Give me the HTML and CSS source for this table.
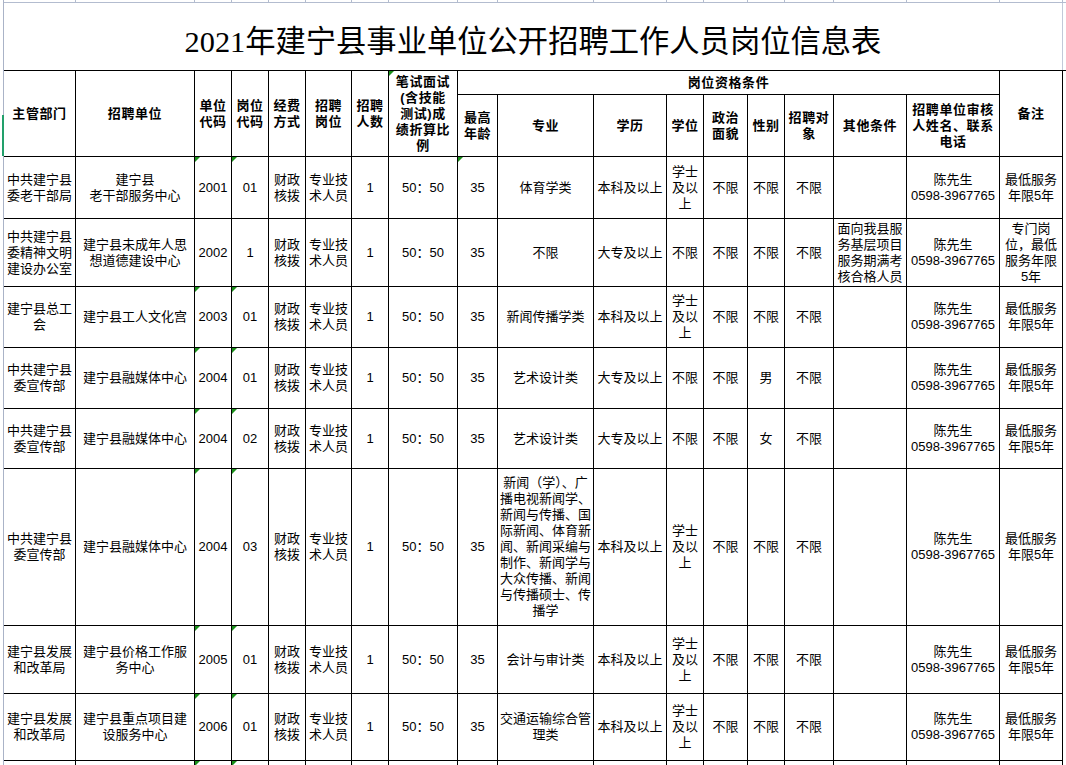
FILE: index.html
```html
<!DOCTYPE html>
<html lang="zh-CN">
<head>
<meta charset="utf-8">
<title>2021年建宁县事业单位公开招聘工作人员岗位信息表</title>
<link rel="stylesheet" href="styles.css">
</head>
<body>
<div class="sheet">
  <div class="topstrip">
    <span></span><span></span><span></span><span></span><span></span><span></span><span></span><span></span><span></span><span></span><span></span><span></span><span></span><span></span><span></span><span></span><span></span><span></span>
  </div>
  <div class="title">2021年建宁县事业单位公开招聘工作人员岗位信息表</div>
  <div class="grid">
    <div class="c h r2">主管部门</div>
    <div class="c h r2">招聘单位</div>
    <div class="c h r2">单位<br>代码</div>
    <div class="c h r2">岗位<br>代码</div>
    <div class="c h r2">经费<br>方式</div>
    <div class="c h r2">招聘<br>岗位</div>
    <div class="c h r2">招聘<br>人数</div>
    <div class="c h r2 tri">笔试面试<br>(含技能<br>测试)成<br>绩折算比<br>例</div>
    <div class="c h s9">岗位资格条件</div>
    <div class="c h r2">备注</div>
    <div class="c h">最高<br>年龄</div>
    <div class="c h">专业</div>
    <div class="c h">学历</div>
    <div class="c h">学位</div>
    <div class="c h">政治<br>面貌</div>
    <div class="c h">性别</div>
    <div class="c h">招聘对<br>象</div>
    <div class="c h">其他条件</div>
    <div class="c h">招聘单位审核<br>人姓名、联系<br>电话</div>

    <!-- row 1 -->
    <div class="c">中共建宁县<br>委老干部局</div>
    <div class="c">建宁县<br>老干部服务中心</div>
    <div class="c tri">2001</div>
    <div class="c tri">01</div>
    <div class="c">财政<br>核拨</div>
    <div class="c">专业技<br>术人员</div>
    <div class="c">1</div>
    <div class="c">50：50</div>
    <div class="c tri">35</div>
    <div class="c">体育学类</div>
    <div class="c">本科及以上</div>
    <div class="c">学士<br>及以<br>上</div>
    <div class="c">不限</div>
    <div class="c">不限</div>
    <div class="c">不限</div>
    <div class="c"></div>
    <div class="c">陈先生<br>0598-3967765</div>
    <div class="c">最低服务<br>年限5年</div>

    <!-- row 2 -->
    <div class="c">中共建宁县<br>委精神文明<br>建设办公室</div>
    <div class="c">建宁县未成年人思<br>想道德建设中心</div>
    <div class="c">2002</div>
    <div class="c">1</div>
    <div class="c">财政<br>核拨</div>
    <div class="c">专业技<br>术人员</div>
    <div class="c">1</div>
    <div class="c">50：50</div>
    <div class="c">35</div>
    <div class="c">不限</div>
    <div class="c">大专及以上</div>
    <div class="c">不限</div>
    <div class="c">不限</div>
    <div class="c">不限</div>
    <div class="c">不限</div>
    <div class="c">面向我县服<br>务基层项目<br>服务期满考<br>核合格人员</div>
    <div class="c">陈先生<br>0598-3967765</div>
    <div class="c">专门岗<br>位，最低<br>服务年限<br>5年</div>

    <!-- row 3 -->
    <div class="c">建宁县总工<br>会</div>
    <div class="c">建宁县工人文化宫</div>
    <div class="c tri">2003</div>
    <div class="c tri">01</div>
    <div class="c">财政<br>核拨</div>
    <div class="c">专业技<br>术人员</div>
    <div class="c">1</div>
    <div class="c">50：50</div>
    <div class="c">35</div>
    <div class="c">新闻传播学类</div>
    <div class="c">本科及以上</div>
    <div class="c">学士<br>及以<br>上</div>
    <div class="c">不限</div>
    <div class="c">不限</div>
    <div class="c">不限</div>
    <div class="c"></div>
    <div class="c">陈先生<br>0598-3967765</div>
    <div class="c">最低服务<br>年限5年</div>

    <!-- row 4 -->
    <div class="c">中共建宁县<br>委宣传部</div>
    <div class="c">建宁县融媒体中心</div>
    <div class="c tri">2004</div>
    <div class="c tri">01</div>
    <div class="c">财政<br>核拨</div>
    <div class="c">专业技<br>术人员</div>
    <div class="c">1</div>
    <div class="c">50：50</div>
    <div class="c">35</div>
    <div class="c">艺术设计类</div>
    <div class="c">大专及以上</div>
    <div class="c">不限</div>
    <div class="c">不限</div>
    <div class="c">男</div>
    <div class="c">不限</div>
    <div class="c"></div>
    <div class="c">陈先生<br>0598-3967765</div>
    <div class="c">最低服务<br>年限5年</div>

    <!-- row 5 -->
    <div class="c">中共建宁县<br>委宣传部</div>
    <div class="c">建宁县融媒体中心</div>
    <div class="c tri">2004</div>
    <div class="c tri">02</div>
    <div class="c">财政<br>核拨</div>
    <div class="c">专业技<br>术人员</div>
    <div class="c">1</div>
    <div class="c">50：50</div>
    <div class="c">35</div>
    <div class="c">艺术设计类</div>
    <div class="c">大专及以上</div>
    <div class="c">不限</div>
    <div class="c">不限</div>
    <div class="c">女</div>
    <div class="c">不限</div>
    <div class="c"></div>
    <div class="c">陈先生<br>0598-3967765</div>
    <div class="c">最低服务<br>年限5年</div>

    <!-- row 6 -->
    <div class="c">中共建宁县<br>委宣传部</div>
    <div class="c">建宁县融媒体中心</div>
    <div class="c tri">2004</div>
    <div class="c tri">03</div>
    <div class="c">财政<br>核拨</div>
    <div class="c">专业技<br>术人员</div>
    <div class="c">1</div>
    <div class="c">50：50</div>
    <div class="c">35</div>
    <div class="c">新闻（学）、广<br>播电视新闻学、<br>新闻与传播、国<br>际新闻、体育新<br>闻、新闻采编与<br>制作、新闻学与<br>大众传播、新闻<br>与传播硕士、传<br>播学</div>
    <div class="c">本科及以上</div>
    <div class="c">学士<br>及以<br>上</div>
    <div class="c">不限</div>
    <div class="c">不限</div>
    <div class="c">不限</div>
    <div class="c"></div>
    <div class="c">陈先生<br>0598-3967765</div>
    <div class="c">最低服务<br>年限5年</div>

    <!-- row 7 -->
    <div class="c">建宁县发展<br>和改革局</div>
    <div class="c">建宁县价格工作服<br>务中心</div>
    <div class="c tri">2005</div>
    <div class="c tri">01</div>
    <div class="c">财政<br>核拨</div>
    <div class="c">专业技<br>术人员</div>
    <div class="c">1</div>
    <div class="c">50：50</div>
    <div class="c">35</div>
    <div class="c">会计与审计类</div>
    <div class="c">本科及以上</div>
    <div class="c">学士<br>及以<br>上</div>
    <div class="c">不限</div>
    <div class="c">不限</div>
    <div class="c">不限</div>
    <div class="c"></div>
    <div class="c">陈先生<br>0598-3967765</div>
    <div class="c">最低服务<br>年限5年</div>

    <!-- row 8 -->
    <div class="c">建宁县发展<br>和改革局</div>
    <div class="c">建宁县重点项目建<br>设服务中心</div>
    <div class="c tri">2006</div>
    <div class="c tri">01</div>
    <div class="c">财政<br>核拨</div>
    <div class="c">专业技<br>术人员</div>
    <div class="c">1</div>
    <div class="c">50：50</div>
    <div class="c">35</div>
    <div class="c">交通运输综合管<br>理类</div>
    <div class="c">本科及以上</div>
    <div class="c">学士<br>及以<br>上</div>
    <div class="c">不限</div>
    <div class="c">不限</div>
    <div class="c">不限</div>
    <div class="c"></div>
    <div class="c">陈先生<br>0598-3967765</div>
    <div class="c">最低服务<br>年限5年</div>

    <!-- next row (cut off) -->
    <div class="c"></div><div class="c"></div><div class="c tri"></div><div class="c tri"></div>
    <div class="c"></div><div class="c"></div><div class="c"></div><div class="c"></div><div class="c"></div>
    <div class="c"></div><div class="c"></div><div class="c"></div><div class="c"></div><div class="c"></div>
    <div class="c"></div><div class="c"></div><div class="c"></div><div class="c"></div>
  </div>
  <div class="selmark"></div>
</div>
</body>
</html>
```

FILE: styles.css
```css
html, body {
  margin: 0;
  padding: 0;
  background: #ffffff;
  width: 1066px;
  height: 765px;
  overflow: hidden;
}

body {
  font-family: "Liberation Sans", "Noto Sans CJK SC", sans-serif;
  font-size: 13px;
  color: #000000;
}

.sheet {
  position: relative;
  margin-left: 3px;
  border-left: 1px solid #aab3c7;
  height: 765px;
}

.topstrip {
  display: grid;
  grid-template-columns: 72px 119px 37px 37px 37px 46px 37px 69px 40px 96px 73px 37px 44px 37px 49px 73px 93px 63px;
  height: 3px;
  border-bottom: 1px solid #b3bccf;
  box-sizing: border-box;
}

.topstrip span {
  border-right: 1px solid #b3bccf;
}

.title {
  width: 1059px;
  height: 67px;
  box-sizing: border-box;
  border-right: 1px solid #c2c9d8;
  padding-top: 4px;
  display: flex;
  align-items: center;
  justify-content: center;
  font-family: "Liberation Serif", "Noto Sans CJK SC", serif;
  font-size: 30.3px;
  white-space: nowrap;
}

.grid {
  display: grid;
  grid-template-columns: 72px 119px 37px 37px 37px 46px 37px 69px 40px 96px 73px 37px 44px 37px 49px 73px 93px 63px;
  grid-template-rows: 24px 62px 62px 68px 61px 61px 60px 157px 68px 67px 40px;
  border-top: 1px solid #000000;
}

.c {
  position: relative;
  box-sizing: border-box;
  border-right: 1px solid #000000;
  border-bottom: 1px solid #000000;
  display: flex;
  align-items: center;
  justify-content: center;
  text-align: center;
  line-height: 16px;
  white-space: nowrap;
  overflow: hidden;
}

.h {
  font-weight: bold;
  letter-spacing: 0.6px;
}

.r2 {
  grid-row: span 2;
}

.s9 {
  grid-column: span 9;
}

.tri::before {
  content: "";
  position: absolute;
  left: 0;
  top: 0;
  width: 0;
  height: 0;
  border-top: 5px solid #1a8f1a;
  border-right: 5px solid transparent;
}

.selmark {
  position: absolute;
  left: -2px;
  top: 115px;
  width: 2px;
  height: 41px;
  background: #22a06b;
}
```
